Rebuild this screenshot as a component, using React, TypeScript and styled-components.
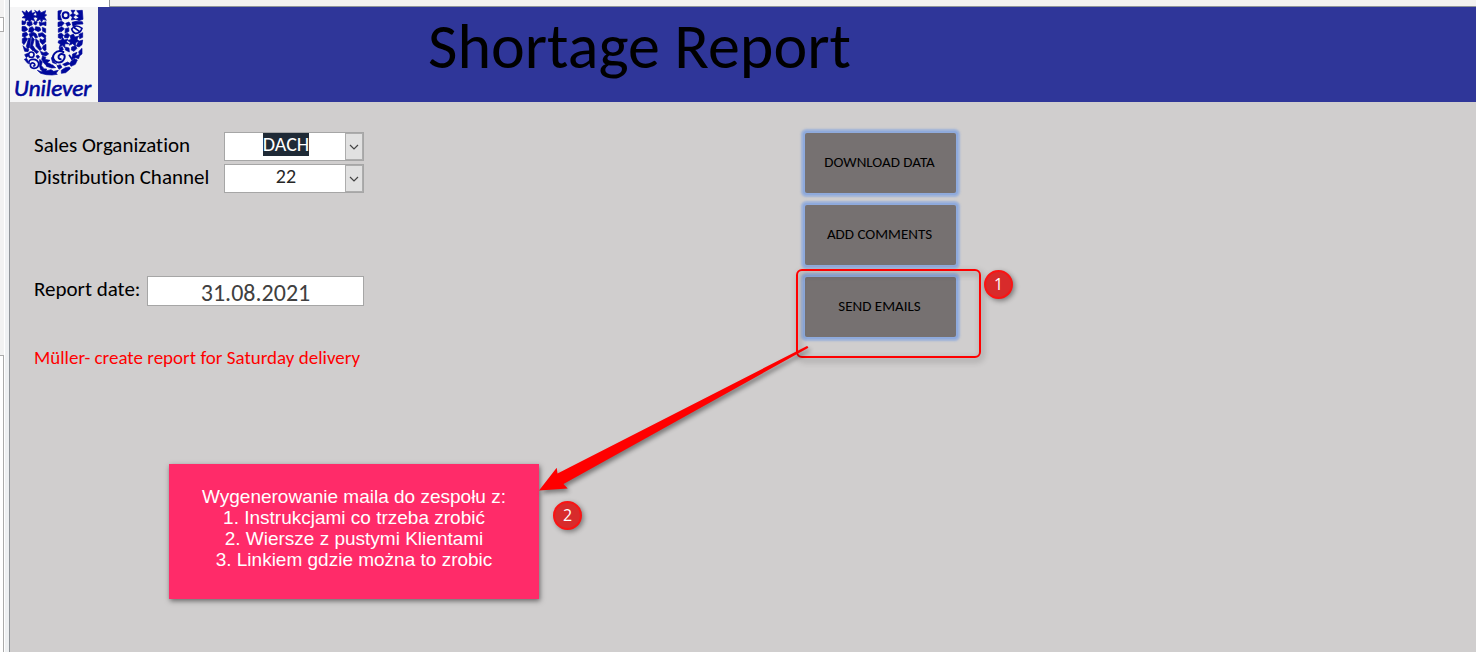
import React from 'react';
import styled, { createGlobalStyle, css } from 'styled-components';

const GlobalStyle = createGlobalStyle`
  *, *::before, *::after { box-sizing: border-box; }
  html, body, #root { margin: 0; min-height: 100%; }
  body {
    background: #d0cece;
    color: #000;
    font-family: Calibri, Carlito, Lato, sans-serif;
    font-variant-ligatures: none;
  }
`;

const Window = styled.div`
  display: grid;
  grid-template-columns: 10px minmax(0, 1fr);
  min-height: 100vh;
  overflow: hidden;
`;

const NavigationEdge = styled.aside`
  display: flex;
  flex-direction: column;
  justify-content: space-between;
  gap: 323px;
  padding-top: 17px;
  background: linear-gradient(90deg, #f2f2f2 4px, #fff 4px 5px, #eef0f2 5px);
  border-right: 1px solid #8f9499;
`;

const EdgeBox = styled.div<{ $tall?: boolean }>`
  width: 4px;
  height: 15px;
  background: #fff;
  border: 1px solid #ababab;
  border-left: 0;
  ${({ $tall }) => $tall && css`
    flex: 1;
    border-bottom: 0;
  `}
`;

const Workspace = styled.div`
  display: flex;
  flex-direction: column;
  min-width: 0;
`;

const TabStrip = styled.div`
  display: flex;
  height: 7px;
  background: #f3f2f0;
  border-bottom: 1px solid #8f9499;
`;

const Tab = styled.div`
  width: 100px;
  height: 7px;
  padding-left: 6px;
  background: #fff;
  border-right: 1px solid #8f9499;
`;

const Header = styled.header`
  display: flex;
  height: 95px;
  background: #2f3699;
`;

const LogoBox = styled.div`
  flex: none;
  width: 88px;
  background: #f5f5f6;
  svg { display: block; }
`;

const Title = styled.h1`
  margin: 0;
  padding-left: 330px;
  font-size: 64px;
  font-weight: 400;
  line-height: 78px;
  white-space: nowrap;
`;

const Content = styled.main`
  display: grid;
  grid-template-columns: 330px 151px;
  column-gap: 441px;
  align-items: start;
  padding: 30px 24px;
`;

const Form = styled.form`
  display: flex;
  flex-direction: column;
  gap: 3px;
`;

const Field = styled.div<{ $date?: boolean }>`
  display: grid;
  grid-template-columns: ${({ $date }) => ($date ? '113px' : '190px')} 1fr;
  height: ${({ $date }) => ($date ? '30px' : '29px')};
  margin-top: ${({ $date }) => ($date ? '80px' : '0')};
`;

const Label = styled.label`
  font-size: 21px;
  line-height: 26px;
  white-space: nowrap;
`;

const Combo = styled.div`
  display: grid;
  grid-template-columns: minmax(0, 1fr) 18px;
  grid-template-rows: 100%;
  border: 1px solid #a6a6a6;
  background: #fff;
`;

const Select = styled.select<{ $selected?: boolean }>`
  grid-area: 1 / 1 / 2 / 3;
  appearance: none;
  width: 100%;
  height: 100%;
  margin: 0;
  padding: 0 16px 4px 0;
  border: 0;
  outline: 0;
  font: inherit;
  font-size: 20px;
  line-height: 23px;
  text-align: center;
  text-align-last: center;
  color: ${({ $selected }) => ($selected ? '#fff' : '#262626')};
  background: ${({ $selected }) =>
    $selected ? 'linear-gradient(#1f2a36, #1f2a36) 38px 0 / 46px 23px no-repeat #fff' : '#fff'};
`;

const DropMark = styled.span`
  grid-area: 1 / 2 / 2 / 3;
  display: grid;
  place-items: center;
  z-index: 1;
  background: #e1e1e1;
  border: 1px solid #adadad;
  pointer-events: none;
`;

const DateInput = styled.input`
  width: 100%;
  min-width: 0;
  height: 30px;
  margin: 0;
  padding: 2px 0 0;
  border: 1px solid #a6a6a6;
  background: #fff;
  color: #404040;
  font: inherit;
  font-size: 24px;
  text-align: center;
`;

const Notice = styled.p`
  margin: 37px 0 0;
  color: #f00;
  font-size: 19px;
  line-height: 24px;
  white-space: nowrap;
`;

const Actions = styled.div`
  display: grid;
  gap: 12px;
  padding-top: 1px;
`;

const ActionButton = styled.button`
  height: 60px;
  padding: 0 2px 2px 0;
  border: 0;
  border-radius: 2px;
  background: #767171;
  box-shadow: 0 0 0 2px #8faadc, 0 0 2px 4px rgba(143, 170, 220, 0.8);
  color: #000;
  font: inherit;
  font-size: 15px;
  white-space: nowrap;
`;

const Highlight = styled.div`
  position: absolute;
  left: 796px;
  top: 269px;
  width: 185px;
  height: 89px;
  border: 2px solid #f00;
  border-radius: 6px;
  filter: drop-shadow(2px 3px 3px rgba(0, 0, 0, 0.4));
  pointer-events: none;
`;

const Arrow = styled.svg`
  position: absolute;
  left: 530px;
  top: 336px;
  overflow: visible;
  filter: drop-shadow(2px 3px 2px rgba(0, 0, 0, 0.4));
  pointer-events: none;
`;

const Message = styled.div`
  position: absolute;
  left: 169px;
  top: 464px;
  width: 370px;
  padding: 22px 0 29px;
  background: #ff2b69;
  box-shadow: 1px 2px 5px rgba(0, 0, 0, 0.5);
  color: #fff;
  font: 19px/21px "Liberation Sans", Arial, sans-serif;
  text-align: center;

  p { margin: 0; }
`;

const Badge = styled.span<{ $x: number; $y: number }>`
  position: absolute;
  left: ${({ $x }) => $x}px;
  top: ${({ $y }) => $y}px;
  display: grid;
  place-items: center;
  width: 29px;
  height: 29px;
  padding-bottom: 2px;
  border: 2px solid #fa1414;
  border-radius: 50%;
  background: #d82b2b;
  box-shadow: 2px 2px 5px rgba(0, 0, 0, 0.4);
  color: #fff;
  font: 16px/18px "Open Sans", sans-serif;
`;

const navy = '#00089b';

function BrandLogo() {
  return (
    <svg width="88" height="95" viewBox="30 21 264 285" role="img" aria-label="Unilever">
      <g fill={navy} stroke={navy} strokeWidth="2" strokeLinejoin="round">
        <path d="M66 33l10 5 3-7 6 7 9-7 2 9 9-3-5 8 8 4-8 5 4 8-10-3-5 8-5-8-9 6 2-10-11-2 8-6z" />
        <path d="M104 31l8 5 6-5 5 7 14-6-3 11 6 2-7 6 6 10-10-3-4 8-5-8-11 7 4-11-9-4 7-5z" />
        <path d="M66 62l12 4-3 7-9 1zM82 66l13-1 2 9-9 5-7-5zM103 64l9 3-4 8-7-3zM117 66l11 2 10-3v12l-9-3-9 4z" />
        <path d="M66 80c10-3 14 2 17 9l-9 6-8-2zM88 84l9-4 6 9-7 9-10-3zM107 80l12 2 4 8-8 5-11-6zM127 82l10 4v12l-9-4z" />
        <path d="M68 100l11-3 5 7-10 8-7-3zM87 102l13-5 8 4 5 11-6 3-7-9-8 8zM115 101l12-3 11 9-3 8-10-7-8 3z" />
        <path d="M67 116l8-4 8 4-11 18-5-5zM86 114l6 1-3 27-6 5-4-8zM96 111l7 7-5 18 7 11-6 6-9-10zM107 117l8 5 4 14 6 11-5 5-12-13zM120 116l8 4 9-7v13l-9 8-8-9zM130 137l8-4v17l-5 2-6-8z" />
        <path d="M69 137l8 8 10 4-3 6-10-1zM103 146l13 9-6 6-9-8zM121 154l10 4 8-3 7 7-9 6-12-4zM74 164l9-4 4 6-8 7zM73 178l7-3 5 10-2 5z" />
        <path d="M108 168l6-3 5 6-6 5zM128 167l10 6-4 5 16 3-8 7 11 5-11 6-10-9-7-12zM119 178l8 7-3 12 7 8-9 4-4-12z" />
        <path d="M112 211l15 5-4-10 17 1-2 6 15-4 8 5 14-3-7 9 4 3-16 2-17-1-17-4z" />
        <path d="M139 191l19 4 9 8-12 1-16-5zM154 174l6-8 1 18 9 8-12-4zM171 197l10-3 5 8-9 6zM184 211l12-8 12-2 3 5-14 12-13 2zM188 193l15-7 8 5-16 7z" />
        <path d="M213 184l10-8 9 4-6 13-13 6-4-7zM218 162l13-5-5 11 14-5-4 13-9-3-12 5zM236 155l10-10v17l-7 5z" />
        <path d="M174 33l11-2-5 13 5 17-11-2zM213 31h12l-6 9 8 5-8 7 8 6-13 2 3-9-7-5 8-6zM230 32l17-1 2 27-12 4-10-4 10-5-8-6 9-4z" />
        <path d="M174 67l11-3 8 5-7 8-12 3zM197 70l10-4 5 8-10 5zM216 67l12-3 19 1 2 7-18 1-12 7z" />
        <path d="M175 86l10-6 8 6-7 8-11 3zM196 86l10-3 1 11-12 6zM175 103l9-4 7 7-8 10-8-3zM193 106l9-7 7 6-5 9-10-1z" />
        <path d="M176 122l9-3 2-8 6 9 11-3-5 8 8 7-12-1-1 12-6-7-10 6 3-10-7-4zM210 107l10-5 5 9 11-3-5 10 7 6-10 3-2 11-8-7-10 5 3-10-8-4 10-4z" />
        <path d="M237 103l11-5v14l-9 4zM236 124l12-4-2 14-9 7-8-3zM177 143l10-3 3 9-9 6zM196 141l11 3 1 12-12-6zM215 141l11-4 5 8-9 9-8-4z" />
      </g>
      <g fill="none" stroke={navy} strokeWidth="6" strokeLinecap="round">
        <circle cx="94" cy="164" r="8" strokeWidth="5" />
        <path d="M87 190q-2-11 11-12 15-1 18 13 0 13-14 14-11-1-11-10 3-10 12-4 4 6-2 7" strokeWidth="5" />
        <circle cx="197" cy="46" r="9" />
        <path d="M190 156q-16-7-26 4-10 12 0 22 11 10 23 2 10-10 6-19-11-7-17 3-2 9 6 10" />
        <path d="M215 87q13-17 31-2-5 16-20 15-8-2-11-13zM224 84l14 10M208 166l8 12" strokeWidth="5" />
      </g>
      <text x="42" y="289" fill={navy} stroke={navy} strokeWidth="2" fontFamily="Calibri, Carlito, Lato, sans-serif" fontSize="69" fontStyle="italic">Unilever</text>
    </svg>
  );
}

function Chevron() {
  return (
    <svg width="10" height="6" viewBox="0 0 10 6" fill="none" stroke="#444" strokeWidth="1.2" aria-hidden="true">
      <path d="M1 1l4 4 4-4" />
    </svg>
  );
}

function ComboBox({ id, value, selected }: { id: string; value: string; selected?: boolean }) {
  return (
    <Combo>
      <Select id={id} defaultValue={value} $selected={selected}>
        <option>{value}</option>
      </Select>
      <DropMark><Chevron /></DropMark>
    </Combo>
  );
}

export default function App() {
  return (
    <>
      <GlobalStyle />
      <Window>
        <NavigationEdge>
          <EdgeBox />
          <EdgeBox $tall />
        </NavigationEdge>
        <Workspace>
          <TabStrip>
            <Tab>
              <svg width="60" height="3" viewBox="0 0 60 3" aria-hidden="true">
                <path d="M0 0h16v2H0z" fill="#6078a0" />
                <path d="M1 0h14v1H1z" fill="#c9daf0" />
                <path d="M42 0h3v1h-3z" fill="#c43b2b" />
                <path d="M45 0h2v1h-2z" fill="#1b3b5c" />
              </svg>
            </Tab>
          </TabStrip>
          <Header>
            <LogoBox><BrandLogo /></LogoBox>
            <Title>Shortage Report</Title>
          </Header>
          <Content>
            <Form>
              <Field>
                <Label htmlFor="sales-organization">Sales Organization</Label>
                <ComboBox id="sales-organization" value="DACH" selected />
              </Field>
              <Field>
                <Label htmlFor="distribution-channel">Distribution Channel</Label>
                <ComboBox id="distribution-channel" value="22" />
              </Field>
              <Field $date>
                <Label htmlFor="report-date">Report date:</Label>
                <DateInput id="report-date" defaultValue="31.08.2021" />
              </Field>
              <Notice>Müller- create report for Saturday delivery</Notice>
            </Form>
            <Actions>
              <ActionButton type="button">DOWNLOAD DATA</ActionButton>
              <ActionButton type="button">ADD COMMENTS</ActionButton>
              <ActionButton type="button">SEND EMAILS</ActionButton>
            </Actions>
          </Content>
        </Workspace>
      </Window>
      <Highlight />
      <Badge $x={984} $y={270}>1</Badge>
      <Message>
        <p>Wygenerowanie maila do zespołu z:</p>
        <p>1. Instrukcjami co trzeba zrobić</p>
        <p>2. Wiersze z pustymi Klientami</p>
        <p>3. Linkiem gdzie można to zrobic</p>
      </Message>
      <Arrow width="290" height="170" viewBox="530 336 290 170" aria-hidden="true">
        <path d="M539 490.500L556.700 467.700L557.500 473.500L807 346Q809 347 808 348L563.500 484L567.700 488.500Z" fill="#f00" />
      </Arrow>
      <Badge $x={553} $y={501}>2</Badge>
    </>
  );
}
